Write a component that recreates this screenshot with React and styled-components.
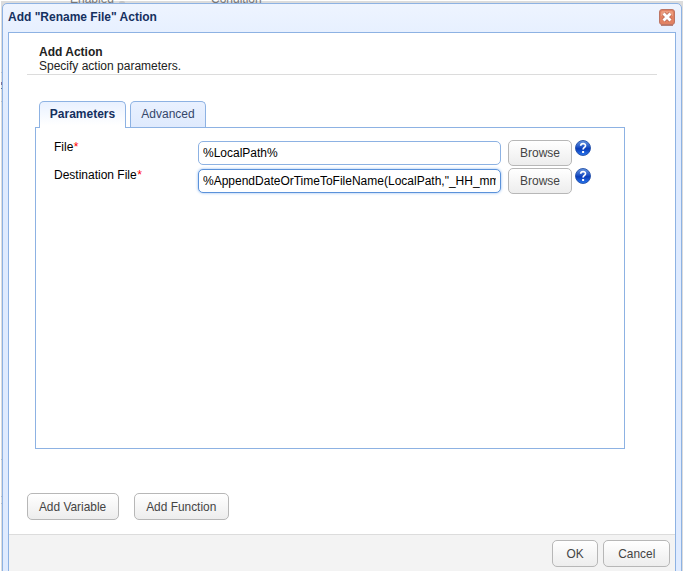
import React, { useState } from 'react'
import styled, { createGlobalStyle } from 'styled-components'

function CloseIcon() {
    return (
        <svg width="16" height="17" viewBox="0 0 16 17">
            <rect x="2" y="15" width="12" height="2" fill="#b58078" />
            <rect x="0.5" y="0.5" width="15" height="15" rx="2.5" fill="#e28262" stroke="#bd7564" />
            <path d="M2 3.5Q2 2 3.5 2h9Q14 2 14 3.5V7H2z" fill="#eb9c7e" />
            <path d="M4.5 4.5l7 7M11.5 4.5l-7 7" stroke="#b96852" strokeWidth="4.4" />
            <path d="M4.5 4.5l7 7M11.5 4.5l-7 7" stroke="#fff" strokeWidth="2.9" />
        </svg>
    )
}

function HelpIcon() {
    return (
        <svg width="16" height="16" viewBox="0 0 16 16">
            <defs>
                <linearGradient id="help-fill" x1="0" y1="0" x2="0" y2="1">
                    <stop offset="0" stopColor="#6b9ae2" />
                    <stop offset="0.45" stopColor="#1c50c4" />
                    <stop offset="0.55" stopColor="#0a3cb8" />
                    <stop offset="1" stopColor="#2a78f0" />
                </linearGradient>
            </defs>
            <circle cx="8" cy="8" r="7.5" fill="url(#help-fill)" stroke="#2450a8" strokeWidth="0.9" />
            <path d="M5.7 5.8C5.8 3 10.6 3 10.5 5.7C10.5 7.5 8.1 7.3 8.1 9.6" fill="none" stroke="#fff" strokeWidth="1.7" />
            <rect x="7.1" y="11" width="2" height="2" fill="#fff" />
        </svg>
    )
}

function Field({ label, value, onChange, focused }) {
    return (
        <FieldRow>
            <Label>{label}<span>*</span></Label>
            <Input type="text" value={value} onChange={e => onChange(e.target.value)} $focused={focused} />
            <Button $width={64} $height={26}><span>Browse</span></Button>
            <Help><HelpIcon /></Help>
        </FieldRow>
    )
}

function App() {
    const [tab, setTab] = useState('Parameters')
    const [file, setFile] = useState('%LocalPath%')
    const [destination, setDestination] = useState('%AppendDateOrTimeToFileName(LocalPath,"_HH_mm_ss")%')

    return (
        <Page>
            <GlobalStyle />
            <Backdrop>
                <Behind $left={70}>Enabled</Behind>
                <Sort />
                <Behind $left={211}>Condition</Behind>
                <Mark $top={72} $height={1} $color="#b4bccb" />
                <Mark $top={82} $height={3} $color="#7c6f96" />
                <Mark $top={88} $height={1} $color="#5a6f94" />
                <Mark $top={101} $height={1} $color="#b4bccb" />
                <Mark $top={459} $height={1} $color="#b4bccb" />
                <Mark $top={496} $height={1} $color="#b4bccb" />
                <Mark $top={503} $height={1} $color="#b4bccb" />
            </Backdrop>
            <Dialog>
                <TitleBar>
                    <h1>Add "Rename File" Action</h1>
                    <CloseButton aria-label="Close"><CloseIcon /></CloseButton>
                </TitleBar>
                <Body>
                    <Content>
                        <Heading>
                            <h2>Add Action</h2>
                            <p>Specify action parameters.</p>
                        </Heading>
                        <Tabs>
                            <Tab $width={87} $active={tab === 'Parameters'} onClick={() => setTab('Parameters')}>Parameters</Tab>
                            <Tab $width={76} $active={tab === 'Advanced'} onClick={() => setTab('Advanced')}>Advanced</Tab>
                        </Tabs>
                        <Panel>
                            {tab === 'Parameters' && (
                                <>
                                    <Field label="File" value={file} onChange={setFile} />
                                    <Field label="Destination File" value={destination} onChange={setDestination} focused />
                                </>
                            )}
                        </Panel>
                        <Actions>
                            <Button $width={92} $large><span>Add Variable</span></Button>
                            <Button $width={95} $large><span>Add Function</span></Button>
                        </Actions>
                    </Content>
                    <Footer>
                        <Button $width={46} $large><span>OK</span></Button>
                        <Button $width={67} $large><span>Cancel</span></Button>
                    </Footer>
                </Body>
            </Dialog>
        </Page>
    )
}

const GlobalStyle = createGlobalStyle`
    * {
        box-sizing: border-box;
    }
    body {
        margin: 0;
        overflow: hidden;
        background: #fff;
        font-family: "Liberation Sans", Arial, sans-serif;
        font-size: 12px;
    }
    h1, h2, p {
        margin: 0;
        font-size: 12px;
    }
    button, input {
        font-family: inherit;
    }
`;
const Page = styled.div`
    position: relative;
    width: 683px;
    height: 571px;
    padding: 3px 1px 0 2px;
    overflow: hidden;
`;
/* strip of the page that shows around the dialog */
const Backdrop = styled.div`
    position: absolute;
    inset: 1px 0 0 1px;
    background: #dcdcdc;
`;
const Behind = styled.span`
    position: absolute;
    left: ${props => props.$left - 1}px;
    top: -9px;
    line-height: 14px;
    color: #777;
`;
const Sort = styled.span`
    position: absolute;
    left: 118px;
    top: 0;
    width: 6px;
    height: 2px;
    border-radius: 2px 2px 0 0;
    background: #c4c4c4;
`;
const Mark = styled.span`
    position: absolute;
    left: 0;
    top: ${props => props.$top - 1}px;
    width: 1px;
    height: ${props => props.$height}px;
    background: ${props => props.$color};
`;
const Dialog = styled.div`
    position: relative;
    display: flex;
    flex-direction: column;
    height: 580px;
    padding: 0 5px;
    border: 1px solid #8db2e3;
    border-radius: 5px 5px 0 0;
    background: linear-gradient(#eef4ff, #e7f0ff 28px, #dfebff 130px);
`;
const TitleBar = styled.div`
    display: flex;
    justify-content: space-between;
    height: 28px;
    h1{
        line-height: 14px;
        padding-top: 6px;
        color: #15305f;
    }
`;
const CloseButton = styled.button`
    display: block;
    width: 16px;
    height: 17px;
    margin: 5px 1px 0 0;
    padding: 0;
    border: 0;
    background: none;
    svg{
        display: block;
    }
`;
const Body = styled.div`
    flex: 1;
    display: flex;
    flex-direction: column;
    border: 1px solid #8db2e3;
    background: #fff;
`;
const Content = styled.div`
    height: 501px;
    padding: 12px 18px 0 18px;
`;
const Heading = styled.div`
    height: 30px;
    padding-left: 12px;
    border-bottom: 1px solid #dcdcdc;
    color: #222;
    line-height: 14px;
`;
const Tabs = styled.div`
    display: flex;
    gap: 4px;
    height: 26px;
    margin: 26px 0 0 12px;
`;
const Tab = styled.button`
    position: relative;
    width: ${props => props.$width}px;
    height: ${props => props.$active ? 27 : 26}px;
    padding: 0 0 ${props => props.$active ? 3 : 2}px;
    border: 1px solid #8db2e3;
    border-bottom: 0;
    border-radius: 5px 5px 0 0;
    background: ${props => props.$active ? 'linear-gradient(#e9f1ff, #fff 90%)' : 'linear-gradient(#e9f1ff, #dfeafd)'};
    color: ${props => props.$active ? '#15305f' : '#34466a'};
    font-size: 12px;
    font-weight: ${props => props.$active ? 'bold' : 'normal'};
    z-index: 1;
`;
const Panel = styled.div`
    width: 590px;
    height: 322px;
    margin-left: 8px;
    padding-top: 12px;
    border: 1px solid #8db2e3;
`;
const FieldRow = styled.div`
    display: flex;
    height: 28px;
    padding-left: 18px;
`;
const Label = styled.label`
    width: 144px;
    line-height: 14px;
    color: #000;
    span{
        margin-left: 0.5px;
        color: #f00;
    }
`;
const Input = styled.input`
    width: 303px;
    height: 24px;
    margin: 1px 7px 0 0;
    padding: 0 4px;
    border: 1px solid ${props => props.$focused ? '#5b92da' : '#8db2e3'};
    border-radius: 5px;
    outline: none;
    box-shadow: ${props => props.$focused ? '0 0 3px #8db8f0' : 'none'};
    color: #000;
    font-size: 12px;
`;
const Button = styled.button`
    width: ${props => props.$width}px;
    height: ${props => props.$height || 27}px;
    padding: 0;
    border: 1px solid #b7b7b7;
    border-radius: 5px;
    background: linear-gradient(#fff, #ededed);
    color: #444;
    font-size: ${props => props.$large ? 14 : 12}px;
    white-space: nowrap;
    span{
        display: inline-block;
        margin: 0 -8px;
        transform: ${props => props.$large ? 'translateY(-1px) scale(0.85, 0.95)' : 'none'};
    }
`;
const Help = styled.span`
    width: 16px;
    height: 16px;
    margin-left: 3px;
    svg{
        display: block;
    }
`;
const Actions = styled.div`
    display: flex;
    gap: 15px;
    margin-top: 44px;
`;
const Footer = styled.div`
    flex: 1;
    display: flex;
    justify-content: flex-end;
    gap: 5px;
    padding: 5px 5px 0 0;
    border-top: 1px solid #dcdcdc;
    background: #f3f3f3;
`;
export default App
